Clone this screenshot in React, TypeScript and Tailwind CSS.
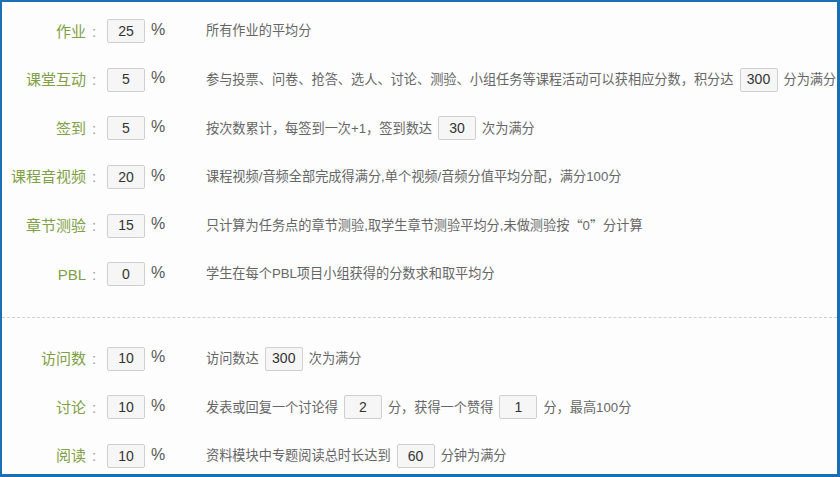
import React from "react";

type Part = string | { box: string } | { cjk: string };

interface IRule {
  label: string;
  value: string;
  desc: Part[];
}

const topRules: IRule[] = [
  { label: "作业", value: "25", desc: ["所有作业的平均分"] },
  {
    label: "课堂互动",
    value: "5",
    desc: [
      "参与投票、问卷、抢答、选人、讨论、测验、小组任务等课程活动可以获相应分数，积分达",
      { box: "300" },
      "分为满分",
    ],
  },
  {
    label: "签到",
    value: "5",
    desc: ["按次数累计，每签到一次+1，签到数达", { box: "30" }, "次为满分"],
  },
  {
    label: "课程音视频",
    value: "20",
    desc: ["课程视频/音频全部完成得满分,单个视频/音频分值平均分配，满分100分"],
  },
  {
    label: "章节测验",
    value: "15",
    desc: [
      "只计算为任务点的章节测验,取学生章节测验平均分,未做测验按",
      { cjk: "“" },
      "0",
      { cjk: "”" },
      "分计算",
    ],
  },
  { label: "PBL", value: "0", desc: ["学生在每个PBL项目小组获得的分数求和取平均分"] },
];

const bottomRules: IRule[] = [
  { label: "访问数", value: "10", desc: ["访问数达", { box: "300" }, "次为满分"] },
  {
    label: "讨论",
    value: "10",
    desc: ["发表或回复一个讨论得", { box: "2" }, "分，获得一个赞得", { box: "1" }, "分，最高100分"],
  },
  {
    label: "阅读",
    value: "10",
    desc: ["资料模块中专题阅读总时长达到", { box: "60" }, "分钟为满分"],
  },
];

const NumBox = ({ value, className = "" }: { value: string; className?: string }) => (
  <span
    className={
      "inline-flex h-[24px] w-[38px] shrink-0 items-center justify-center rounded-[2px] border border-[#cfcfcf] bg-[#f6f6f6] text-[14px] text-[#333] " +
      className
    }
  >
    {value}
  </span>
);

const RuleRow = ({ rule }: { rule: IRule }) => (
  <div className="flex h-[48.6px] items-center">
    <div className="flex w-[105px] shrink-0 items-center justify-end whitespace-nowrap text-[15px] text-[#80a046]">
      <span className="mt-[1px]">{rule.label}</span>
      <span className="mt-[1px] w-[21px] pl-[6px] text-[#999]">:</span>
    </div>
    <NumBox value={rule.value} />
    <span className="ml-[6px] -mt-[3px] w-[55px] shrink-0 text-[16px] text-[#555]">%</span>
    <div className="flex items-center whitespace-nowrap text-[13.2px] text-[#666]">
      {rule.desc.map((p, i) =>
        typeof p === "string" ? (
          <span key={i}>{p}</span>
        ) : "box" in p ? (
          <NumBox key={i} value={p.box} className="mx-[6px]" />
        ) : (
          <span key={i} style={{ fontFamily: '"Noto Sans CJK SC", sans-serif' }}>
            {p.cjk}
          </span>
        )
      )}
    </div>
  </div>
);

export default function App() {
  return (
    <div
      className="h-[477px] w-[840px] overflow-hidden border-t-2 border-l-2 border-r-[3px] border-b-[3px] border-[#1b6fb3] bg-[#fdfdfd]"
      style={{ fontFamily: '"Liberation Sans", "Noto Sans CJK SC", sans-serif' }}
    >
      <div className="pt-[5px]">
        {topRules.map((r) => (
          <RuleRow key={r.label} rule={r} />
        ))}
      </div>
      <div className="mt-[18px] border-t border-dashed border-[#d0d0d0]" />
      <div className="mt-[17px]">
        {bottomRules.map((r) => (
          <RuleRow key={r.label} rule={r} />
        ))}
      </div>
    </div>
  );
}
